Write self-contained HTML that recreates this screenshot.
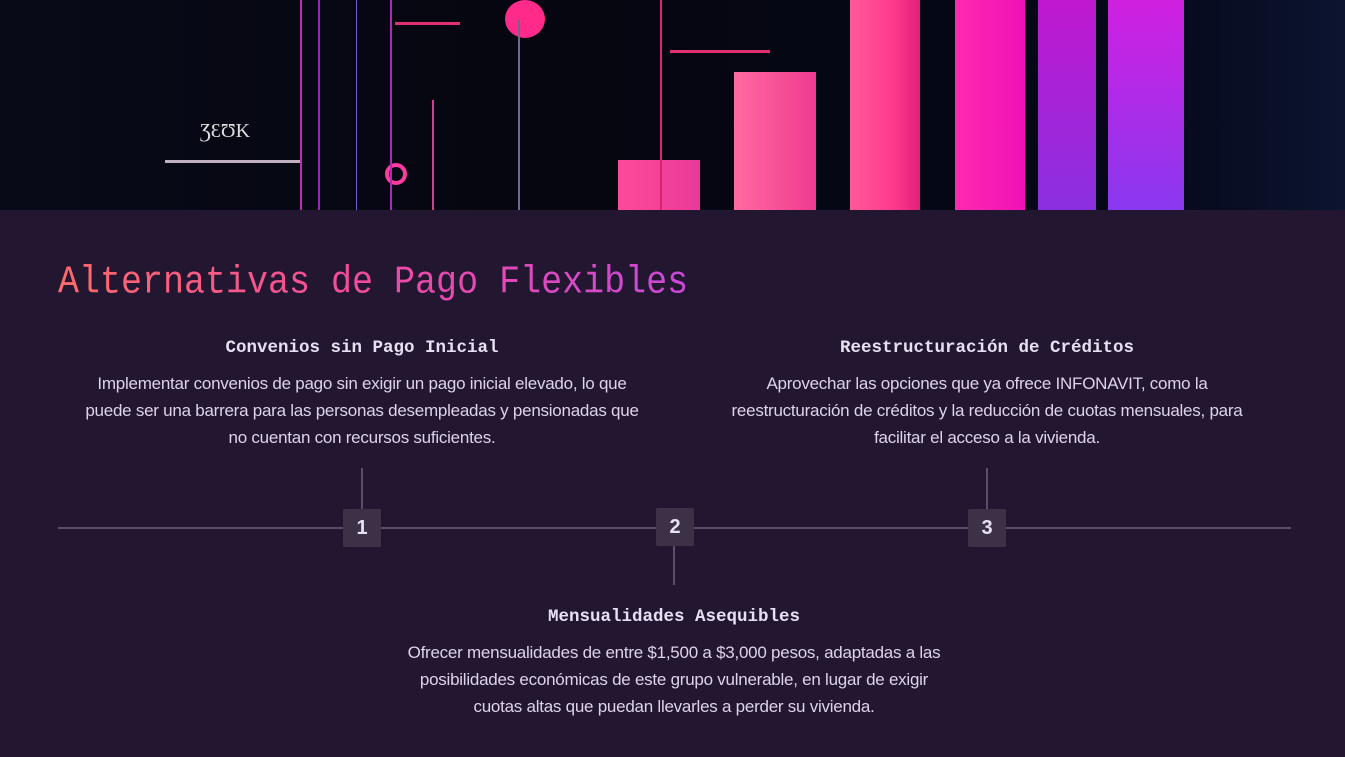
<!DOCTYPE html>
<html><head><meta charset="utf-8"><style>
*{margin:0;padding:0;box-sizing:border-box}
body{width:1345px;height:757px;background:#221631;overflow:hidden;position:relative;font-family:"Liberation Sans",sans-serif}
.hero{position:absolute;left:0;top:0;width:1345px;height:210px;background:linear-gradient(90deg,#080a18 0%,#05060f 40%,#06081a 85%,#0c1430 100%);overflow:hidden}
.hero div{position:absolute}
h1{position:absolute;left:58px;top:260px;font-family:"Liberation Mono",monospace;font-weight:normal;font-size:35px;transform:scaleY(1.12);transform-origin:left top;background:linear-gradient(90deg,#ff6a6a,#f04aa0 50%,#c84ad8);-webkit-background-clip:text;color:transparent;white-space:nowrap}
.t{position:absolute;text-align:center;color:#e6dcef}
.t h3{font-family:"Liberation Mono",monospace;font-size:17.5px;font-weight:bold;margin-bottom:12px;color:#e8e0f2}
.t p{font-size:17px;line-height:27px;letter-spacing:-0.25px;color:#ded3ea}
.line{position:absolute;background:#5c4d6a}
.box{position:absolute;width:38px;height:38px;background:#3d3148;border-radius:2px;color:#e8e0f2;font-size:20px;font-weight:bold;text-align:center;line-height:38px}
</style></head><body>
<div class="hero">
 <div style="left:850px;top:0;width:70px;height:210px;background:linear-gradient(90deg,#ff5a9a,#ff3a8c 60%,#e0207a)"></div>
 <div style="left:955px;top:0;width:70px;height:210px;background:linear-gradient(90deg,#ff2ab0,#f010b8)"></div>
 <div style="left:1038px;top:0;width:58px;height:210px;background:linear-gradient(180deg,#c018d0,#8a30e0)"></div>
 <div style="left:1108px;top:0;width:76px;height:210px;background:linear-gradient(180deg,#d020e0,#8a38f0)"></div>
 <div style="left:734px;top:72px;width:82px;height:138px;background:linear-gradient(90deg,#ff6aa0,#f03a90)"></div>
 <div style="left:618px;top:160px;width:82px;height:50px;background:linear-gradient(90deg,#ff4a9a,#e83a9a)"></div>
 <div style="left:505px;top:0;width:40px;height:38px;border-radius:50%;background:#ff2a8a"></div>
 <div style="left:385px;top:163px;width:22px;height:22px;border-radius:50%;border:4px solid #ff3aa0"></div>
 <div style="left:300px;top:0;width:2px;height:210px;background:#c02ab0"></div>
 <div style="left:318px;top:0;width:2px;height:210px;background:#a020c0"></div>
 <div style="left:356px;top:0;width:1px;height:210px;background:#6a60d0"></div>
 <div style="left:390px;top:0;width:2px;height:210px;background:#b028c0"></div>
 <div style="left:432px;top:100px;width:2px;height:110px;background:#d04090"></div>
 <div style="left:518px;top:20px;width:2px;height:190px;background:#6a6a90"></div>
 <div style="left:660px;top:0;width:2px;height:210px;background:#e0206a"></div>
 <div style="left:670px;top:50px;width:100px;height:3px;background:#e03070"></div>
 <div style="left:395px;top:22px;width:65px;height:3px;background:#e03070"></div>
 <div style="left:165px;top:160px;width:135px;height:3px;background:#c0b0c0"></div>
 <div style="left:200px;top:120px;color:#ddd;font-size:20px;font-family:'Liberation Serif',serif">ƷƐƱK</div>
</div>
<h1>Alternativas de Pago Flexibles</h1>
<div class="t" style="left:62px;top:338px;width:600px"><h3>Convenios sin Pago Inicial</h3><p>Implementar convenios de pago sin exigir un pago inicial elevado, lo que<br>puede ser una barrera para las personas desempleadas y pensionadas que<br>no cuentan con recursos suficientes.</p></div>
<div class="t" style="left:687px;top:338px;width:600px"><h3>Reestructuración de Créditos</h3><p>Aprovechar las opciones que ya ofrece INFONAVIT, como la<br>reestructuración de créditos y la reducción de cuotas mensuales, para<br>facilitar el acceso a la vivienda.</p></div>
<div class="t" style="left:374px;top:607px;width:600px"><h3>Mensualidades Asequibles</h3><p>Ofrecer mensualidades de entre $1,500 a $3,000 pesos, adaptadas a las<br>posibilidades económicas de este grupo vulnerable, en lugar de exigir<br>cuotas altas que puedan llevarles a perder su vivienda.</p></div>
<div class="line" style="left:58px;top:527px;width:1233px;height:2px"></div>
<div class="line" style="left:361px;top:468px;width:2px;height:41px"></div>
<div class="line" style="left:673px;top:546px;width:2px;height:39px"></div>
<div class="line" style="left:986px;top:468px;width:2px;height:41px"></div>
<div class="box" style="left:343px;top:509px">1</div>
<div class="box" style="left:656px;top:508px">2</div>
<div class="box" style="left:968px;top:509px">3</div>
</body></html>
